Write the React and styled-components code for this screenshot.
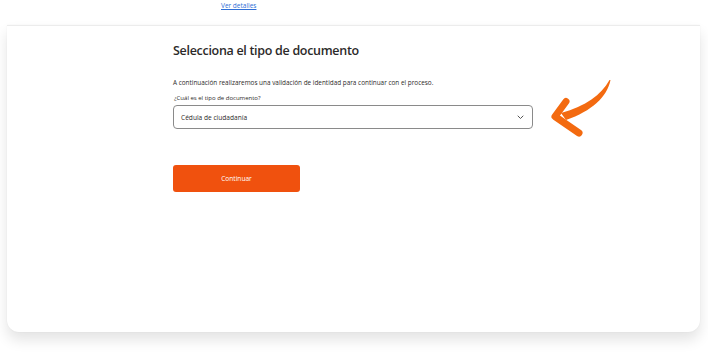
import React from "react";
import styled, { createGlobalStyle } from "styled-components";

const Global = createGlobalStyle`
  html, body { margin: 0; padding: 0; background: #ffffff; }
  body { font-family: "Open Sans", "Noto Sans", sans-serif; color: #2c2a29; }
  * { box-sizing: border-box; }
`;

const Page = styled.div`
  width: 708px;
  height: 356px;
  overflow: hidden;
  display: flex;
  flex-direction: column;
`;

const TopBar = styled.div`
  height: 25px;
  padding-left: 221px;
  padding-top: 2px;
  font-size: 6.5px;
  line-height: 8px;
`;

const DetailsLink = styled.a`
  font-size: 6.5px;
  color: #2f6fd6;
  text-decoration: underline;
  cursor: pointer;
`;

const Card = styled.div`
  position: relative;
  margin: 0 8px 0 7px;
  height: 307px;
  background: #fff;
  border-top: 1px solid #ececec;
  border-radius: 0 0 12px 12px;
  box-shadow: 0 8px 14px rgba(0, 0, 0, 0.11), 0 0 2px rgba(0, 0, 0, 0.05);
  padding: 16px 0 0 166px;
`;

const Content = styled.div`
  width: 360px;
  display: flex;
  flex-direction: column;
`;

const Title = styled.h1`
  margin: 0;
  font-size: 12.5px;
  font-weight: 600;
  letter-spacing: -0.3px;
  color: #2c2a29;
  line-height: 18px;
`;

const Lead = styled.p`
  margin: 18px 0 0;
  font-size: 6.4px;
  line-height: 9px;
  color: #2c2a29;
`;

const Label = styled.label`
  margin-top: 7px;
  padding-left: 1px;
  font-size: 6px;
  line-height: 8px;
  color: #2c2a29;
`;

const SelectBox = styled.div`
  margin-top: 3px;
  height: 24px;
  border: 1px solid #8a8a8a;
  border-radius: 4px;
  display: flex;
  align-items: center;
  justify-content: space-between;
  padding: 0 8px 0 7px;
  font-size: 6.6px;
  color: #2c2a29;
`;

const Chevron = styled.svg`
  width: 7px;
  height: 5px;
`;

const Button = styled.button`
  margin-top: 36px;
  width: 127px;
  height: 27px;
  border: none;
  border-radius: 3px;
  background: #f0510e;
  color: #fff;
  font-family: "Open Sans", "Noto Sans", sans-serif;
  font-size: 6.6px;
  padding: 0;
`;

const Arrow = styled.svg`
  position: absolute;
  left: 533px;
  top: 29px;
  width: 80px;
  height: 90px;
`;

export default function App() {
  return (
    <Page>
      <Global />
      <TopBar>
        <DetailsLink>Ver detalles</DetailsLink>
      </TopBar>
      <Card>
        <Content>
          <Title>Selecciona el tipo de documento</Title>
          <Lead>
            A continuación realizaremos una validación de identidad para continuar con el proceso.
          </Lead>
          <Label>¿Cuál es el tipo de documento?</Label>
          <SelectBox>
            <span>Cédula de ciudadanía</span>
            <Chevron viewBox="0 0 7 5">
              <path d="M1 1 L3.5 3.5 L6 1" fill="none" stroke="#555" strokeWidth="1" strokeLinecap="round" strokeLinejoin="round" />
            </Chevron>
          </SelectBox>
          <Button>Continuar</Button>
        </Content>
        <Arrow viewBox="540 55 80 90">
          <path
            d="M610.5 80 C607 97 592 111 566 120 L561 113 C586 106 601 95 609.5 80 Z"
            fill="#f36a10"
          />
          <path
            d="M566 101.5 L555 116.5 L579 133"
            fill="none"
            stroke="#f36a10"
            strokeWidth="7"
            strokeLinecap="round"
            strokeLinejoin="round"
          />
        </Arrow>
      </Card>
    </Page>
  );
}
